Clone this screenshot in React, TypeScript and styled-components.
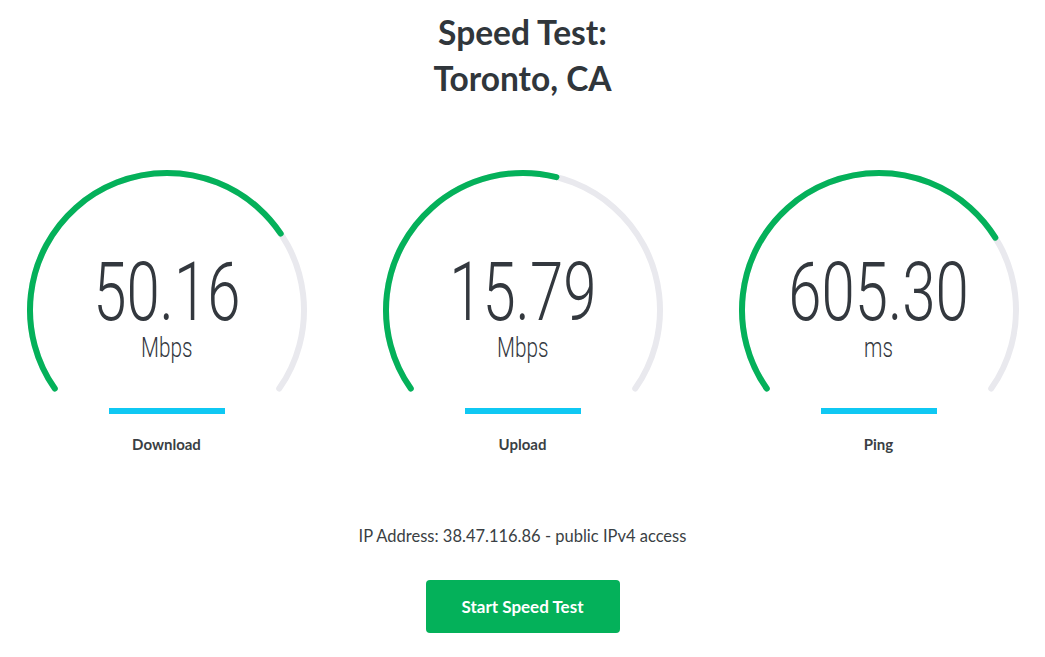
import React from "react";
import styled, { createGlobalStyle } from "styled-components";

const Global = createGlobalStyle`
  html, body { margin: 0; padding: 0; background: #ffffff; }
  body { font-family: "Lato", "Open Sans", sans-serif; color: #333a40; }
`;

const Page = styled.main`
  display: flex;
  flex-direction: column;
  align-items: center;
  padding-top: 9px;
`;

const Title = styled.h1`
  margin: 0;
  font-family: "Lato", sans-serif;
  font-weight: 700;
  font-size: 33.5px;
  line-height: 46px;
  text-align: center;
  color: #30363b;
`;

const Gauges = styled.section`
  display: grid;
  grid-template-columns: repeat(3, 300px);
  column-gap: 56px;
  justify-content: center;
  margin-top: 59px;
  width: 100%;
`;

const Gauge = styled.div`
  display: flex;
  flex-direction: column;
  align-items: center;
`;

const Dial = styled.div`
  position: relative;
  width: 300px;
  height: 240px;
`;

const Readout = styled.div`
  position: absolute;
  left: 0;
  right: 0;
  top: 96px;
  display: flex;
  flex-direction: column;
  align-items: center;
`;

const Value = styled.div`
  font-family: "Roboto", sans-serif;
  font-weight: 300;
  font-size: 82px;
  line-height: 72px;
  color: #33383e;
  transform: scaleX(0.73);
  white-space: nowrap;
`;

const Unit = styled.div`
  font-family: "Roboto", sans-serif;
  font-weight: 300;
  font-size: 28px;
  line-height: 32px;
  margin-top: 4px;
  color: #33383e;
  transform: scaleX(0.74);
`;

const Bar = styled.div`
  width: 116px;
  height: 6px;
  background: #0fc8f3;
  margin-top: 8px;
`;

const Label = styled.div`
  margin-top: 20px;
  font-family: "Lato", sans-serif;
  font-weight: 700;
  font-size: 15px;
  line-height: 20px;
  color: #3a3f44;
`;

const Ip = styled.p`
  margin: 70px 0 0;
  font-family: "Lato", sans-serif;
  font-size: 16.5px;
  line-height: 24px;
  color: #3a3f44;
`;

const Button = styled.button`
  margin-top: 32px;
  width: 194px;
  height: 53px;
  border: none;
  border-radius: 4px;
  background: #04b15a;
  color: #ffffff;
  font-family: "Lato", sans-serif;
  font-weight: 700;
  font-size: 17px;
  cursor: pointer;
`;

const R = 137;
const CX = 150;
const CY = 150;
const SPAN = 250;

function pt(deg: number) {
  const t = (deg * Math.PI) / 180;
  return [CX + R * Math.sin(t), CY - R * Math.cos(t)];
}

function ArcSvg({ fraction }: { fraction: number }) {
  const [x1, y1] = pt(-SPAN / 2);
  const [x2, y2] = pt(SPAN / 2);
  const d = `M ${x1} ${y1} A ${R} ${R} 0 1 1 ${x2} ${y2}`;
  const len = (R * SPAN * Math.PI) / 180;
  return (
    <svg width="300" height="240" viewBox="0 0 300 240">
      <path d={d} fill="none" stroke="#e9e9ee" strokeWidth={6} strokeLinecap="round" />
      <path
        d={d}
        fill="none"
        stroke="#04b15a"
        strokeWidth={6}
        strokeLinecap="round"
        strokeDasharray={`${len * fraction} ${len}`}
      />
    </svg>
  );
}

const data = [
  { value: "50.16", unit: "Mbps", label: "Download", fraction: 181 / 250 },
  { value: "15.79", unit: "Mbps", label: "Upload", fraction: 139 / 250 },
  { value: "605.30", unit: "ms", label: "Ping", fraction: 183 / 250 },
];

export default function App() {
  return (
    <>
      <Global />
      <Page>
        <Title>
          Speed Test:
          <br />
          Toronto, CA
        </Title>
        <Gauges>
          {data.map((g) => (
            <Gauge key={g.label}>
              <Dial>
                <ArcSvg fraction={g.fraction} />
                <Readout>
                  <Value>{g.value}</Value>
                  <Unit>{g.unit}</Unit>
                </Readout>
              </Dial>
              <Bar />
              <Label>{g.label}</Label>
            </Gauge>
          ))}
        </Gauges>
        <Ip>IP Address: 38.47.116.86 - public IPv4 access</Ip>
        <Button>Start Speed Test</Button>
      </Page>
    </>
  );
}
